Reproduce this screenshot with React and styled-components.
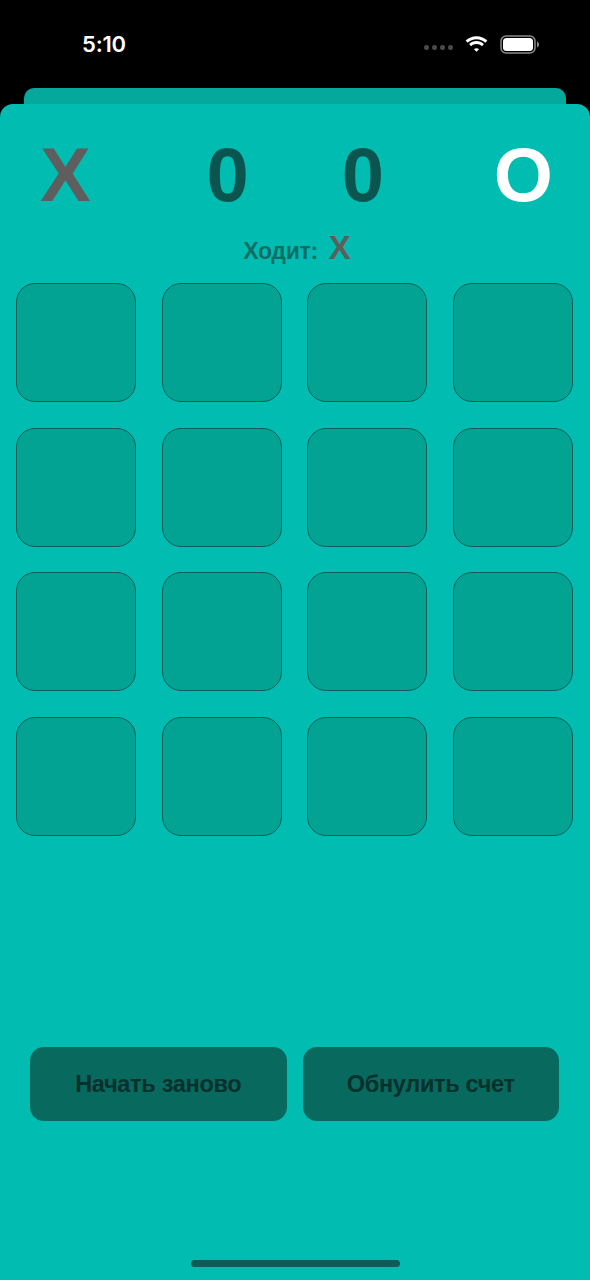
import React from "react";
import styled, { createGlobalStyle } from "styled-components";

const GlobalStyle = createGlobalStyle`
  html, body {
    margin: 0;
    padding: 0;
    background: #000;
  }
  * {
    box-sizing: border-box;
  }
`;

const Screen = styled.div`
  width: 590px;
  height: 1280px;
  display: flex;
  flex-direction: column;
  background: #000;
  font-family: "Liberation Sans", Arial, sans-serif;
  overflow: hidden;
`;

const StatusBar = styled.div`
  height: 88px;
  flex: 0 0 auto;
  display: flex;
  align-items: flex-start;
  justify-content: space-between;
  padding: 29px 50px 0 82px;
  color: #fff;
`;

const Time = styled.div`
  font-family: Inter, "Liberation Sans", sans-serif;
  font-weight: 600;
  font-size: 22px;
  line-height: 30px;
  letter-spacing: -0.2px;
`;

const StatusIcons = styled.div`
  display: flex;
  align-items: center;
  gap: 11px;
  height: 30px;
`;

const Dots = styled.div`
  display: flex;
  gap: 3px;
  margin-top: 6px;
  span {
    width: 5px;
    height: 5px;
    border-radius: 50%;
    background: #4a4a4a;
  }
`;

const BackSheet = styled.div`
  flex: 0 0 auto;
  height: 16px;
  margin: 0 24px;
  border-radius: 10px 10px 0 0;
  background: #04a99c;
`;

const Sheet = styled.div`
  flex: 1 1 auto;
  display: flex;
  flex-direction: column;
  background: #01bcb0;
  border-radius: 13px 13px 0 0;
`;

const ScoreRow = styled.div`
  display: flex;
  justify-content: space-between;
  align-items: center;
  padding: 34px 37px 0 40px;
`;

const Big = styled.div`
  font-weight: 700;
  font-size: 76px;
  line-height: 74px;
  color: ${({ $color }) => $color};
`;

const Scores = styled.div`
  display: flex;
  gap: 93px;
  margin-left: 6px;
`;

const TurnRow = styled.div`
  display: flex;
  justify-content: center;
  align-items: baseline;
  gap: 11px;
  height: 40px;
  margin-top: 17px;
  padding-left: 4px;
`;

const TurnLabel = styled.span`
  font-weight: 700;
  font-size: 23px;
  letter-spacing: -0.3px;
  color: #0b6e66;
`;

const TurnMark = styled.span`
  font-weight: 700;
  font-size: 33px;
  color: #5e5e5e;
`;

const Board = styled.div`
  display: grid;
  grid-template-columns: repeat(4, 120px);
  grid-auto-rows: 119px;
  column-gap: 25.5px;
  row-gap: 25.5px;
  padding: 0 0 0 16px;
  margin-top: 14px;
`;

const Cell = styled.div`
  background: #02a393;
  border: 1px solid #0b5f57;
  border-radius: 19px;
`;

const Actions = styled.div`
  margin-top: auto;
  display: flex;
  gap: 16px;
  padding: 0 31px 0 30px;
`;

const ActionButton = styled.button`
  flex: 1 1 0;
  height: 74px;
  border: none;
  border-radius: 14px;
  background: #08695f;
  color: #05302b;
  font-family: "Liberation Sans", Arial, sans-serif;
  font-weight: 700;
  font-size: 23.5px;
  letter-spacing: -0.3px;
  cursor: pointer;
`;

const HomeArea = styled.div`
  height: 159px;
  display: flex;
  align-items: flex-end;
  justify-content: center;
  padding-bottom: 13px;
`;

const HomeIndicator = styled.div`
  width: 209px;
  height: 7px;
  border-radius: 4px;
  background: #0a5e57;
`;

const WifiIcon = () => (
  <svg width="25" height="19" viewBox="0 0 25 19">
    <path d="M12.5 4.2c3.4 0 6.5 1.3 8.8 3.5l2-2.1C20.5 2.9 16.7 1.2 12.5 1.2S4.5 2.9 1.7 5.6l2 2.1c2.3-2.2 5.4-3.5 8.8-3.5z" fill="#fff" />
    <path d="M12.5 9.1c2.1 0 4 .8 5.4 2.1l2-2.1c-1.9-1.8-4.5-3-7.4-3s-5.5 1.2-7.4 3l2 2.1c1.4-1.3 3.3-2.1 5.4-2.1z" fill="#fff" />
    <path d="M12.5 13.2c1 0 1.9.4 2.5 1l-2.5 2.6-2.5-2.6c.6-.6 1.5-1 2.5-1z" fill="#fff" />
  </svg>
);

const BatteryIcon = () => (
  <svg width="40" height="19" viewBox="0 0 40 19">
    <rect x="1" y="1" width="34" height="17" rx="5" fill="none" stroke="#8a8a8a" strokeWidth="1.5" />
    <rect x="3" y="3" width="30" height="13" rx="3.5" fill="#fff" />
    <path d="M37 6.5c1.2.4 2 1.6 2 3s-.8 2.6-2 3z" fill="#8a8a8a" />
  </svg>
);

export default function App() {
  return (
    <Screen>
      <GlobalStyle />
      <StatusBar>
        <Time>5:10</Time>
        <StatusIcons>
          <Dots>
            <span />
            <span />
            <span />
            <span />
          </Dots>
          <WifiIcon />
          <BatteryIcon />
        </StatusIcons>
      </StatusBar>
      <BackSheet />
      <Sheet>
        <ScoreRow>
          <Big $color="#5e5e5e">X</Big>
          <Scores>
            <Big $color="#0a554f">0</Big>
            <Big $color="#0a554f">0</Big>
          </Scores>
          <Big $color="#ffffff">O</Big>
        </ScoreRow>
        <TurnRow>
          <TurnLabel>Ходит:</TurnLabel>
          <TurnMark>X</TurnMark>
        </TurnRow>
        <Board>
          {Array.from({ length: 16 }, (_, i) => (
            <Cell key={i} />
          ))}
        </Board>
        <Actions>
          <ActionButton>Начать заново</ActionButton>
          <ActionButton>Обнулить счет</ActionButton>
        </Actions>
        <HomeArea>
          <HomeIndicator />
        </HomeArea>
      </Sheet>
    </Screen>
  );
}
